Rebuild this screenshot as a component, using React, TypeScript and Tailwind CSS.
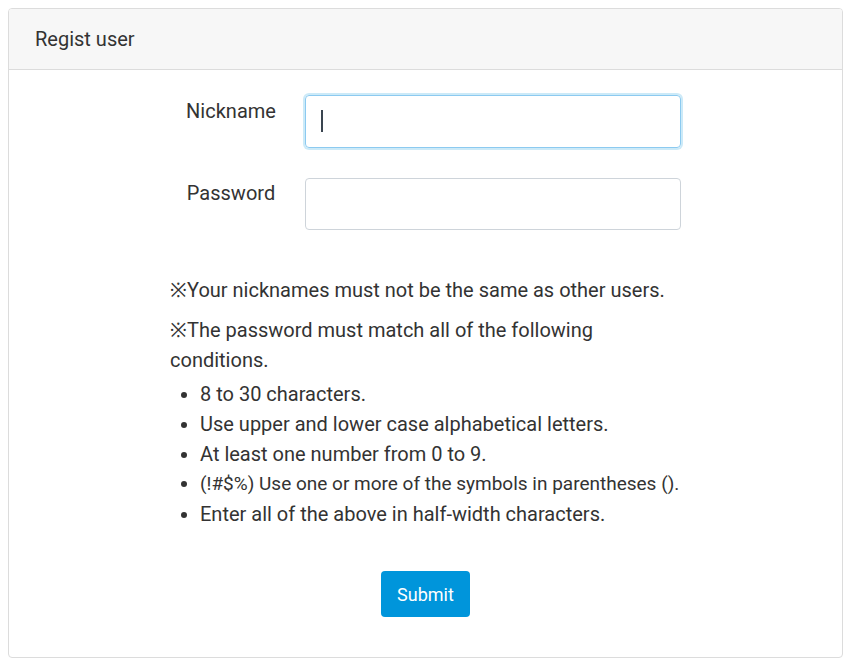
import React from 'react';

const rules = [
  { text: '8 to 30 characters.', small: false },
  { text: 'Use upper and lower case alphabetical letters.', small: false },
  { text: 'At least one number from 0 to 9.', small: false },
  { text: '(!#$%) Use one or more of the symbols in parentheses ().', small: true },
  { text: 'Enter all of the above in half-width characters.', small: false },
];

export default function App() {
  return (
    <div className="min-h-screen bg-white p-2 font-['Roboto',sans-serif] text-[#333]">
      <div className="w-[835px] rounded border border-[#dcdcdc] overflow-hidden">
        <div className="h-[61px] bg-[#f7f7f7] border-b border-[#dcdcdc] flex items-center px-[26px]">
          <span className="text-[20px]">Regist user</span>
        </div>

        <div className="pt-[25px] pb-[40px]">
          <div className="w-[511px] ml-[161px]">
            <div className="flex items-start mb-[30px]">
              <label className="w-[122px] text-center text-[20px] leading-[30px] pt-[1px]">Nickname</label>
              <div className="relative ml-[13px] flex-1">
                <input
                  type="text"
                  className="w-full h-[53px] rounded border border-[#8ccaf0] shadow-[0_0_0_2px_rgba(0,149,219,0.2)] outline-none px-3 caret-transparent"
                />
                <span className="absolute left-[16px] top-[15px] w-[2px] h-[22px] bg-[#3a4550]" />
              </div>
            </div>

            <div className="flex items-start">
              <label className="w-[122px] text-center text-[20px] leading-[30px]">Password</label>
              <input
                type="password"
                className="ml-[13px] flex-1 h-[52px] rounded border border-[#ced4da] outline-none px-3"
              />
            </div>

            <div className="mt-[45px] text-[20px] leading-[30px]">
              <p>※Your nicknames must not be the same as other users.</p>
              <p className="mt-[10px]">※The password must match all of the following conditions.</p>
              <ul className="mt-[4px] list-disc pl-[30px]">
                {rules.map((r) => (
                  <li key={r.text} className={r.small ? 'text-[19px] leading-[30px]' : ''}>
                    {r.text}
                  </li>
                ))}
              </ul>
            </div>

            <div className="mt-[42px] flex justify-center">
              <button className="h-[46px] px-[16px] rounded bg-[#0095db] text-white text-[18px]">Submit</button>
            </div>
          </div>
        </div>
      </div>
    </div>
  );
}
